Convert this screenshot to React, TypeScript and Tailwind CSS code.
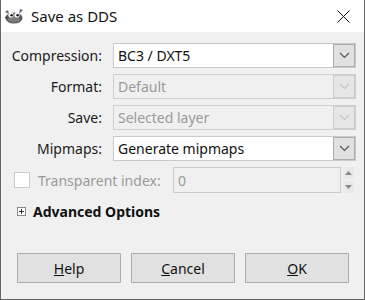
import React from 'react';

const font = { fontFamily: '"Noto Sans", "Open Sans", sans-serif' };

const GimpIcon: React.FC = () => (
  <svg width="20" height="18" viewBox="0 0 20 18">
    <path d="M1 5 L4 3 L5 7 Z" fill="#6b6b6b" />
    <path d="M19 3 L16 2 L15 7 Z" fill="#6b6b6b" />
    <ellipse cx="10" cy="11" rx="8.5" ry="5.5" fill="#5a5a5a" />
    <ellipse cx="10" cy="12.5" rx="6" ry="3" fill="#7a7a7a" />
    <circle cx="7" cy="8" r="2.6" fill="#fff" />
    <circle cx="13" cy="8" r="2.6" fill="#fff" />
    <circle cx="7.6" cy="8.3" r="1.2" fill="#111" />
    <circle cx="13.6" cy="8.3" r="1.2" fill="#111" />
    <path d="M0.5 10 L3 9.5 L2.5 12 Z" fill="#333" />
  </svg>
);

const Chevron: React.FC<{ disabled?: boolean }> = ({ disabled }) => (
  <svg width="11" height="7" viewBox="0 0 11 7">
    <path d="M1 1 L5.5 5.5 L10 1" fill="none" stroke={disabled ? '#c3c3c3' : '#555'} strokeWidth="1.2" />
  </svg>
);

const Combo: React.FC<{ value: string; disabled?: boolean }> = ({ value, disabled }) => (
  <div
    className={`flex h-[25px] flex-1 items-stretch border ${
      disabled ? 'border-[#cfcfcf] bg-[#f0f0f0]' : 'border-[#c9c9c9] bg-white'
    }`}
  >
    <div className={`flex flex-1 items-center pl-[4px] text-[14px] ${disabled ? 'text-[#9a9a9a]' : 'text-[#111]'}`}>
      {value}
    </div>
    <div
      className={`flex w-[22px] items-center justify-center border ${
        disabled ? 'border-[#cccccc] bg-[#e6e6e6]' : 'border-[#acacac] bg-[#e1e1e1]'
      }`}
    >
      <Chevron disabled={disabled} />
    </div>
  </div>
);

const Row: React.FC<{ label: string; value: string; disabled?: boolean }> = ({ label, value, disabled }) => (
  <div className="flex items-center">
    <div className="w-[101px] text-right text-[14px] text-[#1a1a1a]">{label}</div>
    <div className="ml-[11px] mr-[8px] flex flex-1">
      <Combo value={value} disabled={disabled} />
    </div>
  </div>
);

const DialogButton: React.FC<{ first: string; rest: string }> = ({ first, rest }) => (
  <button className="flex h-[30px] w-[104px] items-center justify-center border border-[#adadad] bg-[#e1e1e1] text-[14px] text-[#111]">
    <span className="underline underline-offset-1">{first}</span>
    {rest}
  </button>
);

export default function App() {
  return (
    <div className="flex h-[300px] w-[365px] flex-col border-x border-b border-[#646464] bg-[#f0f0f0]" style={font}>
      <div className="flex h-[32px] items-center bg-white pl-[3px]">
        <GimpIcon />
        <span className="ml-[7px] text-[15px] text-[#111]">Save as DDS</span>
        <div className="ml-auto mr-[14px] flex items-center">
          <svg width="13" height="13" viewBox="0 0 13 13">
            <path d="M0.5 0.5 L12.5 12.5 M12.5 0.5 L0.5 12.5" stroke="#111" strokeWidth="1" />
          </svg>
        </div>
      </div>

      <div className="flex flex-1 flex-col pt-[11px]">
        <div className="flex flex-col gap-[6px]">
          <Row label="Compression:" value="BC3 / DXT5" />
          <Row label="Format:" value="Default" disabled />
          <Row label="Save:" value="Selected layer" disabled />
          <Row label="Mipmaps:" value="Generate mipmaps" />
        </div>

        <div className="mt-[6px] flex h-[26px] items-center">
          <div className="ml-[13px] h-[16px] w-[16px] border border-[#cccccc] bg-white" />
          <span className="ml-[8px] text-[14px] text-[#9a9a9a]">Transparent index:</span>
          <div className="ml-auto flex h-[26px] items-center">
            <div className="flex h-[26px] w-[168px] items-center border border-[#cccccc] bg-[#f0f0f0] pl-[4px] text-[14px] text-[#9a9a9a]">
              0
            </div>
            <div className="ml-[2px] mr-[10px] flex h-[26px] w-[11px] flex-col justify-between">
              <div className="flex h-[12px] items-center justify-center bg-[#e9e9e9]">
                <svg width="7" height="4" viewBox="0 0 7 4">
                  <path d="M0 4 L3.5 0 L7 4 Z" fill="#8a8a8a" />
                </svg>
              </div>
              <div className="flex h-[12px] items-center justify-center bg-[#e9e9e9]">
                <svg width="7" height="4" viewBox="0 0 7 4">
                  <path d="M0 0 L7 0 L3.5 4 Z" fill="#8a8a8a" />
                </svg>
              </div>
            </div>
          </div>
        </div>

        <div className="mt-[8px] flex items-center pl-[16px]">
          <div className="flex h-[9px] w-[9px] items-center justify-center border border-[#8a8a8a] bg-white">
            <svg width="7" height="7" viewBox="0 0 7 7">
              <path d="M1 3.5 H6 M3.5 1 V6" stroke="#333" strokeWidth="1" />
            </svg>
          </div>
          <span className="ml-[7px] text-[14px] font-bold text-[#111]">Advanced Options</span>
        </div>

        <div className="mt-auto mb-[16px] flex justify-center gap-[10px] pl-[1px]">
          <DialogButton first="H" rest="elp" />
          <DialogButton first="C" rest="ancel" />
          <DialogButton first="O" rest="K" />
        </div>
      </div>
    </div>
  );
}
